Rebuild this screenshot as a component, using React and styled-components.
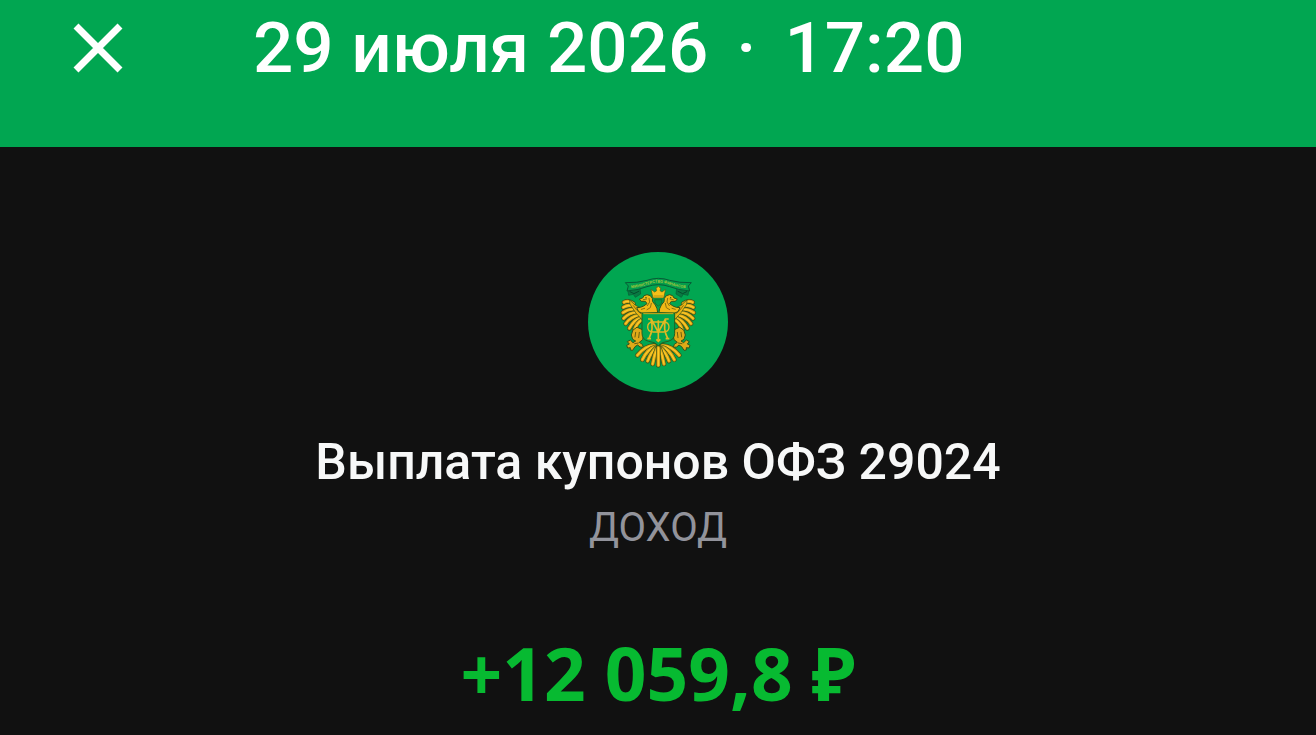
import styled, { createGlobalStyle } from "styled-components";

const operacion = {
  fecha: "29 июля 2026",
  hora: "17:20",
  titulo: "Выплата купонов ОФЗ 29024",
  tipo: "ДОХОД",
  monto: "+12 059,8 ₽",
};

// plumas del ala izquierda, de arriba hacia abajo
const plumas = [
  "M160 176Q146 165 132 172",
  "M163 185Q145 177 130 187",
  "M166 194Q147 190 129 203",
  "M170 203Q149 202 131 220",
  "M175 212Q153 214 137 236",
  "M180 220Q162 224 148 250",
  "M184 226Q171 233 163 255",
];

const cola = [
  "M224 302Q198 300 172 331",
  "M226 306Q203 311 187 344",
  "M228 309Q212 323 203 348",
  "M231 311Q222 331 218 357",
];

export default function App() {
  return (
    <>
      <GlobalStyle />
      <Container>
        <Header>
          <BtnCerrar type="button" aria-label="Закрыть">
            <svg viewBox="0 0 50 50" width="50" height="50">
              <path d="M3 3 47 47M47 3 3 47" stroke="#fff" strokeWidth="7" />
            </svg>
          </BtnCerrar>
          <Fecha>
            <span>{operacion.fecha}</span>
            <span>·</span>
            <span>{operacion.hora}</span>
          </Fecha>
        </Header>
        <Detalle>
          <Escudo />
          <Titulo>{operacion.titulo}</Titulo>
          <Tipo>{operacion.tipo}</Tipo>
          <Monto>{operacion.monto}</Monto>
        </Detalle>
      </Container>
    </>
  );
}

function Pluma({ d }) {
  return (
    <g fill="none" strokeLinecap="round">
      <path d={d} stroke="#34541a" strokeWidth="14" />
      <path d={d} stroke="#d9a317" strokeWidth="10" />
      <path d={d} stroke="#fccb27" strokeWidth="4" />
    </g>
  );
}

function Escudo() {
  return (
    <Logo viewBox="24 21 420 420" aria-hidden="true">
      <defs>
        <path id="cinta" d="M131 133Q180 127 206 118Q235 108 264 118Q290 127 339 133" />
        <g id="mitad" strokeLinejoin="round" strokeLinecap="round">
          {/* cinta, extremo doblado */}
          <path d="M143 132 146 151 160 148 166 157 182 147 180 130Z" fill="#087a42" stroke="#075c35" strokeWidth="2" />
          <path d="M150 140 162 146 176 139" fill="none" stroke="#054c2d" strokeWidth="3" />
          {plumas.map((d) => (
            <Pluma key={d} d={d} />
          ))}
          <path d="M150 166Q164 184 190 192L188 226Q166 206 150 178Z" fill="#e9b313" stroke="#34541a" strokeWidth="2" />
          <path d="M160 182Q170 197 182 206" fill="none" stroke="#8a7012" strokeWidth="3" />
          {/* cabeza y cuello */}
          <path
            d="M183 168 178 162 188 159 192 152 201 149 211 152 217 160 218 170 226 180 231 191 233 203 188 205 176 200 170 188 181 187 191 183 201 176 197 170Z"
            fill="#f0b916"
            stroke="#34541a"
            strokeWidth="3"
          />
          <path d="M190 164 200 162M207 160 209 171 202 182M214 175 211 188 201 194M184 193 194 190" fill="none" stroke="#8a7012" strokeWidth="3" />
          <circle cx="198" cy="158" r="2" fill="#24451b" />
          {/* pata */}
          <path
            d="M172 247 187 254 190 272 188 284 178 292 187 298 190 307 180 306 173 300 165 305 158 316 151 315 151 308 143 309 140 301 148 297 142 290 151 285 159 293 167 288 158 283 154 270 158 257Z"
            fill="#dfaa18"
            stroke="#34541a"
            strokeWidth="3"
          />
          <path d="M167 262 165 276M178 262 176 278M164 296 175 294" fill="none" stroke="#6b5f10" strokeWidth="3" />
          {/* cola */}
          {cola.map((d) => (
            <Pluma key={d} d={d} />
          ))}
        </g>
      </defs>
      <circle cx="234" cy="231" r="210" fill="#01a651" />
      <use href="#mitad" />
      <use href="#mitad" transform="translate(470 0) scale(-1 1)" />
      <Pluma d="M235 308V361" />
      {/* corona */}
      <path
        d="M219 159 213 133 224 141 230 137 228 130 235 124 242 130 240 137 246 141 257 133 251 159Z"
        fill="#f5c119"
        stroke="#4f5f17"
        strokeWidth="2"
      />
      <path d="M221 153H249" stroke="#997f12" strokeWidth="2" />
      <path d="M224 164H246L245 174 235 184 225 174Z" fill="#019c49" stroke="#2e5b19" strokeWidth="2" />
      <path
        d="M136 113Q172 114 201 106Q235 94 269 106Q298 114 334 113L325 123 329 138Q293 135 269 125Q235 113 201 125Q177 135 141 138L145 123Z"
        fill="#039d4c"
        stroke="#075c36"
        strokeWidth="3"
      />
      <Lema>
        <textPath href="#cinta" startOffset="50%" textAnchor="middle">МИНИСТЕРСТВО ФИНАНСОВ</textPath>
      </Lema>
      {/* blasón con monograma */}
      <path d="M186 204H284V265Q284 284 264 289L247 293 235 302 223 293 206 289Q186 284 186 265Z" fill="#01a651" stroke="#236020" strokeWidth="3" />
      <path d="M190 206H280" stroke="#d5aa16" strokeWidth="3" />
      <g fill="none" stroke="#e0b822" strokeWidth="5">
        <path d="M204 222H214L235 262 256 222H266M213 224Q222 250 207 280M257 224Q248 250 263 280M202 281H213M257 281H268M235 226V284M229 283 235 289 241 283" />
        <path d="M220 231Q203 231 203 246Q203 261 220 261H250Q267 261 267 246Q267 231 250 231Z" strokeWidth="4" />
      </g>
    </Logo>
  );
}

const GlobalStyle = createGlobalStyle`
  * {
    box-sizing: border-box;
  }
  body {
    margin: 0;
    background: #111111;
    font-family: Roboto, "Noto Sans", sans-serif;
  }
`;

const Container = styled.main`
  min-height: 100vh;
  background: #111111;
`;

const Header = styled.header`
  display: flex;
  align-items: center;
  gap: 130px;
  padding: 0 73px 51px;
  background: #01a651;
`;

const BtnCerrar = styled.button`
  display: flex;
  flex-shrink: 0;
  padding: 0;
  border: none;
  background: transparent;
  cursor: pointer;
`;

const Fecha = styled.h1`
  display: flex;
  gap: 28px;
  margin: 0;
  font-size: 71px;
  font-weight: 500;
  line-height: 96px;
  white-space: nowrap;
  color: #fff;
`;

const Detalle = styled.section`
  display: flex;
  flex-direction: column;
  align-items: center;
  padding: 105px 24px 12px;
  text-align: center;
`;

const Logo = styled.svg`
  width: 140px;
  height: 140px;
`;

const Lema = styled.text`
  fill: #9fc43c;
  font-size: 12px;
  font-weight: 700;
`;

const Titulo = styled.h2`
  margin: 38px 0 0;
  font-size: 50px;
  font-weight: 500;
  line-height: 64px;
  color: #f7f8f8;
`;

const Tipo = styled.p`
  margin: 0;
  font-size: 40px;
  font-weight: 400;
  line-height: 68px;
  color: #92939b;
`;

const Monto = styled.p`
  margin: 63px 0 0;
  font-family: "Noto Sans", sans-serif;
  font-size: 73px;
  font-weight: 700;
  line-height: 96px;
  color: #07ba31;
`;
